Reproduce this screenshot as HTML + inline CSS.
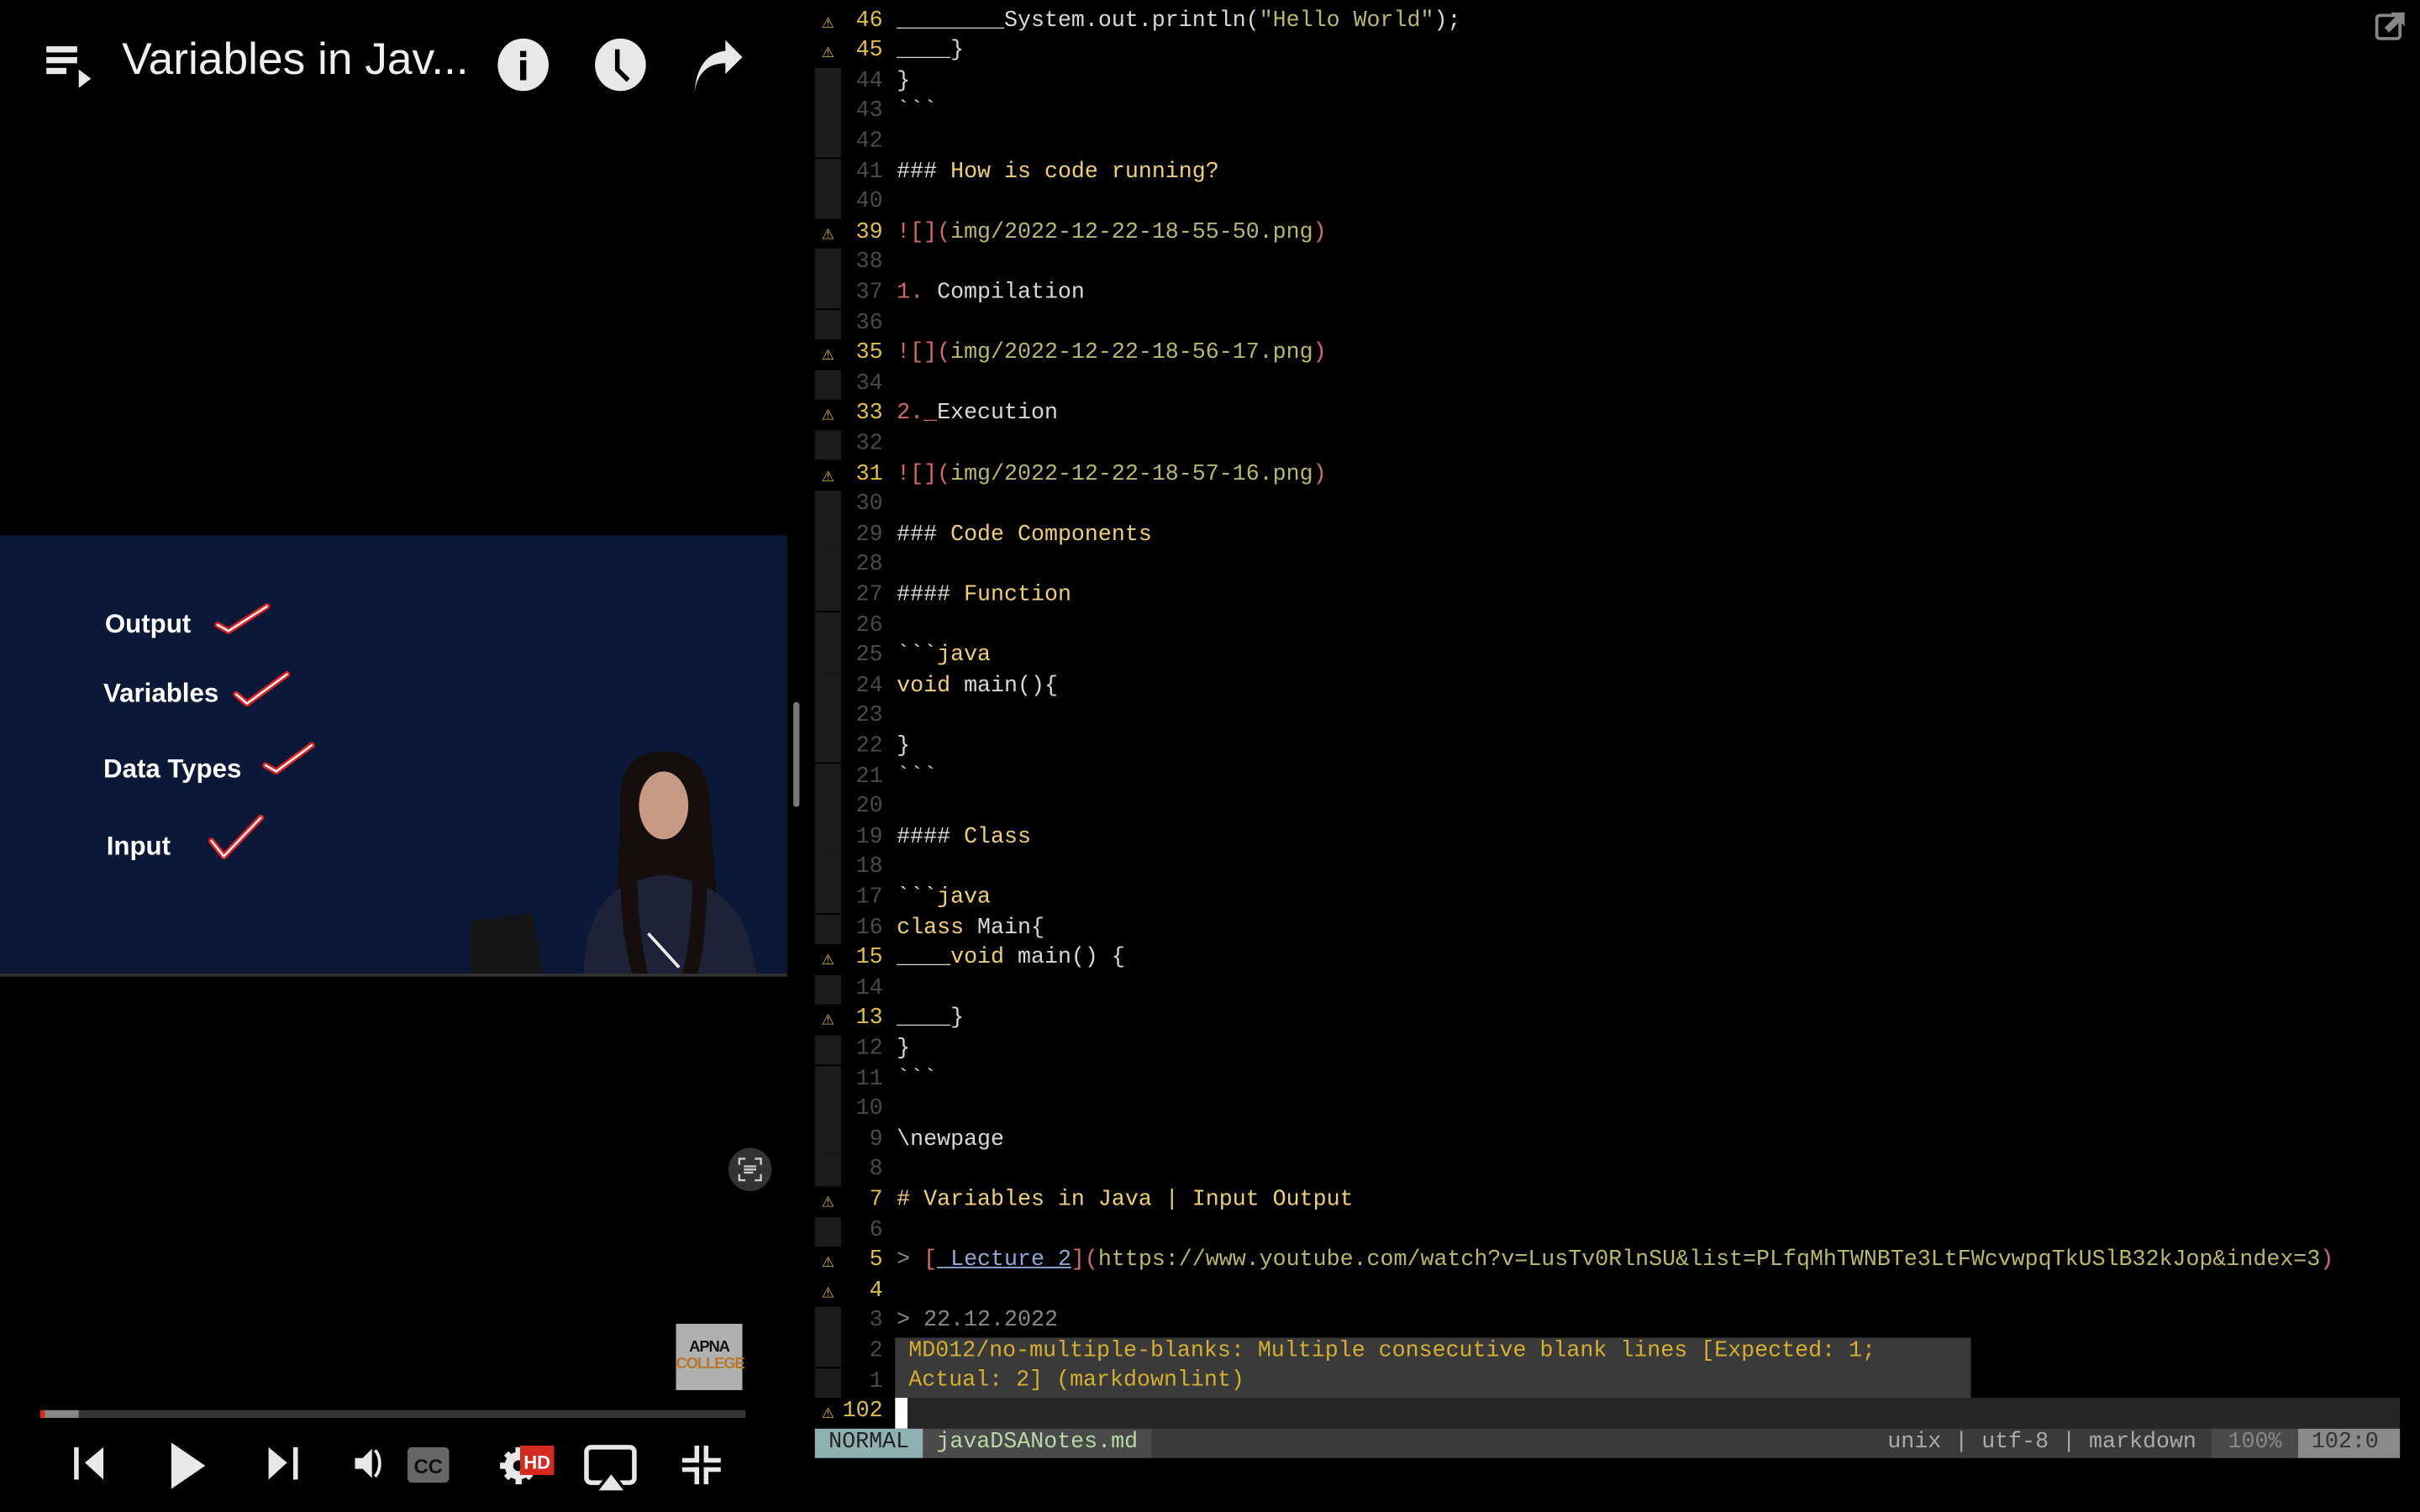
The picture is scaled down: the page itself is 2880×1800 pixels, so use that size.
<!DOCTYPE html>
<html><head><meta charset="utf-8"><style>
html,body{margin:0;padding:0;background:#000;overflow:hidden;width:2880px;height:1800px}
#w{position:absolute;left:0;top:0;width:1568px;height:980px;transform:scale(1.836735);transform-origin:0 0;background:#000;font-family:"Liberation Sans",sans-serif}
.ab{position:absolute}
.ed{position:absolute;left:528px;top:4.5px;width:1030px;font-family:"Liberation Mono",monospace;font-size:14.5px;color:#d8d8d8}
.r{position:absolute;left:0;height:19.6px;line-height:19.6px;white-space:pre;width:1030px}
.sg{position:absolute;left:0;width:17px;height:19.6px;background:#1c1c1c}
.wn{position:absolute;left:0;width:17px;color:#d4b030;font-size:13px;text-align:center}
.n{position:absolute;left:17px;width:27px;text-align:right;color:#4a4a4a}
.nw{color:#e0c040}
.t{position:absolute;left:53px}
.y{color:#f0d070}.o{color:#b8b86a}.rd{color:#d46a6a}.g{color:#888}.bl{color:#8fa8d8;text-decoration:underline}
.slide{position:absolute;left:0;top:347px;width:510px;height:285px;background:#0b1838;overflow:hidden}
.st{position:absolute;color:#fff;font-weight:bold;font-size:17px}
</style></head><body><div id="w">

<svg class="ab" style="left:30px;top:28px" width="32" height="30" viewBox="0 0 32 30"><rect x="0" y="2" width="20" height="4" fill="#e8e8e8"/><rect x="0" y="9" width="20" height="4" fill="#e8e8e8"/><rect x="0" y="16" width="13" height="4" fill="#e8e8e8"/><polygon points="21,17 29,23 21,29" fill="#e8e8e8"/></svg>
<div class="ab" style="left:79px;top:23px;font-size:29px;color:#f0f0f0">Variables in Jav...</div>
<svg class="ab" style="left:322px;top:25px" width="34" height="34" viewBox="0 0 34 34"><ellipse cx="17" cy="17" rx="16.5" ry="17" fill="#e8e8e8"/><rect x="15" y="8" width="4" height="4" fill="#000"/><rect x="15" y="14" width="4" height="13" fill="#000"/></svg>
<svg class="ab" style="left:385px;top:25px" width="34" height="34" viewBox="0 0 34 34"><ellipse cx="17" cy="17" rx="16.5" ry="17" fill="#e8e8e8"/><path d="M15 7 V20 L22 27" stroke="#000" stroke-width="3" fill="none"/></svg>
<svg class="ab" style="left:448px;top:26px" width="36" height="36" viewBox="0 0 36 36"><path d="M2 34 C4 20 12 15 22 15 V22 L33 11 L22 0 V7 C10 8 3 18 2 34Z" fill="#e8e8e8"/></svg>

<div class="slide">
<div class="st" style="left:68px;top:48px">Output</div>
<div class="st" style="left:67px;top:93px">Variables</div>
<div class="st" style="left:67px;top:142px">Data Types</div>
<div class="st" style="left:69px;top:192px">Input</div>
<svg class="ab" style="left:0;top:0" width="510" height="285"><g fill="none" stroke-linecap="round" stroke-linejoin="round"><g stroke="#e02020" stroke-width="4"><path d="M141 58 L148 62 L173 46"/><path d="M153 103 L160 109 L186 90"/><path d="M172 149 L179 153 L202 136"/><path d="M137 198 L145 208 L169 183"/></g><g stroke="#fff" stroke-width="1.3"><path d="M141 58 L148 62 L173 46"/><path d="M153 103 L160 109 L186 90"/><path d="M172 149 L179 153 L202 136"/><path d="M137 198 L145 208 L169 183"/></g></g>
<polygon points="305,250 345,245 352,285 305,285" fill="#151515"/>
<path d="M402 175 C400 150 412 140 430 140 C448 140 460 150 460 175 L468 285 L398 285Z" fill="#140e0c"/>
<ellipse cx="430" cy="175" rx="16" ry="22" fill="#c79a86"/>
<path d="M378 285 C380 240 395 225 430 220 C465 225 485 240 490 285Z" fill="#1e2238"/>
<path d="M404 180 C400 220 402 260 410 285 L420 285 C412 250 412 215 414 185Z" fill="#140e0c"/>
<path d="M456 180 C460 220 458 260 452 285 L442 285 C450 250 450 215 446 185Z" fill="#140e0c"/>
<line x1="420" y1="258" x2="440" y2="280" stroke="#eee" stroke-width="2"/>
</svg>
</div>
<div class="ab" style="left:0;top:631px;width:510px;height:2px;background:#333"></div>
<div class="ab" style="left:514px;top:455px;width:4px;height:68px;border-radius:2px;background:#777"></div>

<div class="ab" style="left:472px;top:744px;width:28px;height:28px;border-radius:14px;background:#333"></div>
<svg class="ab" style="left:478px;top:750px" width="16" height="16" viewBox="0 0 16 16" fill="none" stroke="#ccc" stroke-width="1.3"><path d="M1 5V1H5M11 1H15V5M15 11V15H11M5 15H1V11M4 6H12M4 8H12M4 10H10"/></svg>

<div class="ab" style="left:438px;top:858px;width:43px;height:43px;background:#b0b0b0;text-align:center;font-weight:bold;font-size:10px;line-height:11px;letter-spacing:-0.6px"><div style="margin-top:10px;color:#111">APNA</div><div style="color:#b8782a">COLLEGE</div></div>

<div class="ab" style="left:26px;top:914px;width:457px;height:5px;background:#353535"></div>
<div class="ab" style="left:26px;top:914px;width:25px;height:5px;background:#888"></div>
<div class="ab" style="left:26px;top:914px;width:3px;height:5px;background:#e02020"></div>

<svg class="ab" style="left:0;top:930px" width="510" height="45" viewBox="0 0 510 45" fill="#e8e8e8">
<rect x="48" y="8" width="3" height="21"/><polygon points="67,8 67,29 55,18"/>
<polygon points="111,5 111,35 133,20"/>
<polygon points="174,8 174,29 186,18"/><rect x="190" y="8" width="3" height="21"/>
<polygon points="230,15 235,15 241,9 241,28 235,22 230,22"/><path d="M243 10 C247 14 247 23 243 27" stroke="#e8e8e8" stroke-width="2" fill="none"/>
<rect x="264" y="8" width="27" height="23" rx="3" fill="#666"/><text x="277.5" y="25" font-family="Liberation Sans" font-weight="bold" font-size="13" fill="#111" text-anchor="middle">CC</text>
<circle cx="336" cy="20" r="9"/><g stroke="#e8e8e8" stroke-width="4"><line x1="336" y1="8" x2="336" y2="32"/><line x1="324" y1="20" x2="348" y2="20"/><line x1="328" y1="12" x2="344" y2="28"/><line x1="344" y1="12" x2="328" y2="28"/></g><circle cx="336" cy="20" r="3.5" fill="#000"/>
<rect x="337" y="7" width="22" height="19" fill="#d62a20"/><text x="348" y="22" font-family="Liberation Sans" font-weight="bold" font-size="12" fill="#fff" text-anchor="middle">HD</text>
<rect x="380" y="8" width="31" height="23" rx="3" fill="none" stroke="#e8e8e8" stroke-width="3"/><polygon points="386,37 396,24 406,37" fill="#e8e8e8" stroke="#000" stroke-width="2"/>
<g><rect x="450" y="7" width="3" height="10"/><rect x="442" y="15" width="11" height="3"/><rect x="456" y="7" width="3" height="10"/><rect x="456" y="15" width="11" height="3"/><rect x="442" y="21" width="11" height="3"/><rect x="450" y="21" width="3" height="11"/><rect x="456" y="21" width="11" height="3"/><rect x="456" y="21" width="3" height="11"/></g>
</svg>

<svg class="ab" style="left:1538px;top:4px" width="24" height="24" viewBox="0 0 24 24"><rect x="2" y="6" width="15" height="15" rx="2" fill="none" stroke="#888" stroke-width="2"/><polygon points="11,4 20,4 20,13 17,10 10,17 7,14 14,7" fill="#888"/></svg>

<div class="ed">
<div class="r" style="top:0"><span class="wn">⚠</span><span class="n nw">46</span><span class="t">________System.out.println(<span class="o">"Hello World"</span>);</span></div>
<div class="r" style="top:19.6px"><span class="wn">⚠</span><span class="n nw">45</span><span class="t">____}</span></div>
<div class="r" style="top:39.2px"><span class="sg"></span><span class="n">44</span><span class="t">}</span></div>
<div class="r" style="top:58.8px"><span class="sg"></span><span class="n">43</span><span class="t">&#96;&#96;&#96;</span></div>
<div class="r" style="top:78.4px"><span class="sg"></span><span class="n">42</span></div>
<div class="r" style="top:98px"><span class="sg"></span><span class="n">41</span><span class="t">### <span class="y">How is code running?</span></span></div>
<div class="r" style="top:117.6px"><span class="sg"></span><span class="n">40</span></div>
<div class="r" style="top:137.2px"><span class="wn">⚠</span><span class="n nw">39</span><span class="t"><span class="rd">![](</span><span class="o">img/2022-12-22-18-55-50.png</span><span class="rd">)</span></span></div>
<div class="r" style="top:156.8px"><span class="sg"></span><span class="n">38</span></div>
<div class="r" style="top:176.4px"><span class="sg"></span><span class="n">37</span><span class="t"><span class="rd">1.</span> Compilation</span></div>
<div class="r" style="top:196px"><span class="sg"></span><span class="n">36</span></div>
<div class="r" style="top:215.6px"><span class="wn">⚠</span><span class="n nw">35</span><span class="t"><span class="rd">![](</span><span class="o">img/2022-12-22-18-56-17.png</span><span class="rd">)</span></span></div>
<div class="r" style="top:235.2px"><span class="sg"></span><span class="n">34</span></div>
<div class="r" style="top:254.8px"><span class="wn">⚠</span><span class="n nw">33</span><span class="t"><span class="rd">2._</span>Execution</span></div>
<div class="r" style="top:274.4px"><span class="sg"></span><span class="n">32</span></div>
<div class="r" style="top:294px"><span class="wn">⚠</span><span class="n nw">31</span><span class="t"><span class="rd">![](</span><span class="o">img/2022-12-22-18-57-16.png</span><span class="rd">)</span></span></div>
<div class="r" style="top:313.6px"><span class="sg"></span><span class="n">30</span></div>
<div class="r" style="top:333.2px"><span class="sg"></span><span class="n">29</span><span class="t">### <span class="y">Code Components</span></span></div>
<div class="r" style="top:352.8px"><span class="sg"></span><span class="n">28</span></div>
<div class="r" style="top:372.4px"><span class="sg"></span><span class="n">27</span><span class="t">#### <span class="y">Function</span></span></div>
<div class="r" style="top:392px"><span class="sg"></span><span class="n">26</span></div>
<div class="r" style="top:411.6px"><span class="sg"></span><span class="n">25</span><span class="t">&#96;&#96;&#96;<span class="y">java</span></span></div>
<div class="r" style="top:431.2px"><span class="sg"></span><span class="n">24</span><span class="t"><span class="y">void</span> main(){</span></div>
<div class="r" style="top:450.8px"><span class="sg"></span><span class="n">23</span></div>
<div class="r" style="top:470.4px"><span class="sg"></span><span class="n">22</span><span class="t">}</span></div>
<div class="r" style="top:490px"><span class="sg"></span><span class="n">21</span><span class="t">&#96;&#96;&#96;</span></div>
<div class="r" style="top:509.6px"><span class="sg"></span><span class="n">20</span></div>
<div class="r" style="top:529.2px"><span class="sg"></span><span class="n">19</span><span class="t">#### <span class="y">Class</span></span></div>
<div class="r" style="top:548.8px"><span class="sg"></span><span class="n">18</span></div>
<div class="r" style="top:568.4px"><span class="sg"></span><span class="n">17</span><span class="t">&#96;&#96;&#96;<span class="y">java</span></span></div>
<div class="r" style="top:588px"><span class="sg"></span><span class="n">16</span><span class="t"><span class="y">class</span> Main{</span></div>
<div class="r" style="top:607.6px"><span class="wn">⚠</span><span class="n nw">15</span><span class="t">____<span class="y">void</span> main() {</span></div>
<div class="r" style="top:627.2px"><span class="sg"></span><span class="n">14</span></div>
<div class="r" style="top:646.8px"><span class="wn">⚠</span><span class="n nw">13</span><span class="t">____}</span></div>
<div class="r" style="top:666.4px"><span class="sg"></span><span class="n">12</span><span class="t">}</span></div>
<div class="r" style="top:686px"><span class="sg"></span><span class="n">11</span><span class="t">&#96;&#96;&#96;</span></div>
<div class="r" style="top:705.6px"><span class="sg"></span><span class="n">10</span></div>
<div class="r" style="top:725.2px"><span class="sg"></span><span class="n">9</span><span class="t">\newpage</span></div>
<div class="r" style="top:744.8px"><span class="sg"></span><span class="n">8</span></div>
<div class="r" style="top:764.4px"><span class="wn">⚠</span><span class="n nw">7</span><span class="t"><span class="y"># Variables in Java | Input Output</span></span></div>
<div class="r" style="top:784px"><span class="sg"></span><span class="n">6</span></div>
<div class="r" style="top:803.6px"><span class="wn">⚠</span><span class="n nw">5</span><span class="t"><span class="g">&gt;</span> <span class="rd">[</span><span class="bl"> Lecture 2</span><span class="rd">](</span><span class="o">https://www.youtube.com/watch?v=LusTv0RlnSU&amp;list=PLfqMhTWNBTe3LtFWcvwpqTkUSlB32kJop&amp;index=3</span><span class="rd">)</span></span></div>
<div class="r" style="top:823.2px"><span class="wn">⚠</span><span class="n nw">4</span></div>
<div class="r" style="top:842.8px"><span class="sg"></span><span class="n">3</span><span class="t g">&gt; 22.12.2022</span></div>
<div class="r" style="top:862.4px"><span class="sg"></span><span class="n">2</span></div>
<div class="r" style="top:882px"><span class="sg"></span><span class="n">1</span></div>
<div class="ab" style="left:52px;top:862.4px;width:697px;height:39.2px;background:#3a3a3a;color:#d4b030;line-height:19.6px;white-space:pre"> MD012/no-multiple-blanks: Multiple consecutive blank lines [Expected: 1;
 Actual: 2] (markdownlint)</div>
<div class="r" style="top:901.6px"><span class="ab" style="left:52px;top:0;width:975px;height:19.6px;background:#262626"></span><span class="ab" style="left:52px;top:0;width:8px;height:19.6px;background:#fff"></span><span class="wn">⚠</span><span class="n nw">102</span></div>
<div class="r" style="top:921.2px;height:19.6px;background:#3a3a3a;width:1027px"><span class="ab" style="left:0;width:70px;background:#8fb0b0;color:#222;text-align:center">NORMAL</span><span class="ab" style="left:70px;width:148px;background:#4a4a4a;color:#b8d8a8"> javaDSANotes.md</span><span class="ab" style="left:695px;color:#aaa">unix | utf-8 | markdown </span><span class="ab" style="left:905px;width:56px;background:#4a4a4a;color:#888;text-align:center">100%</span><span class="ab" style="left:961px;width:66px;background:#8a8a8a;color:#333"> 102:0</span></div>
</div>
</div></body></html>
